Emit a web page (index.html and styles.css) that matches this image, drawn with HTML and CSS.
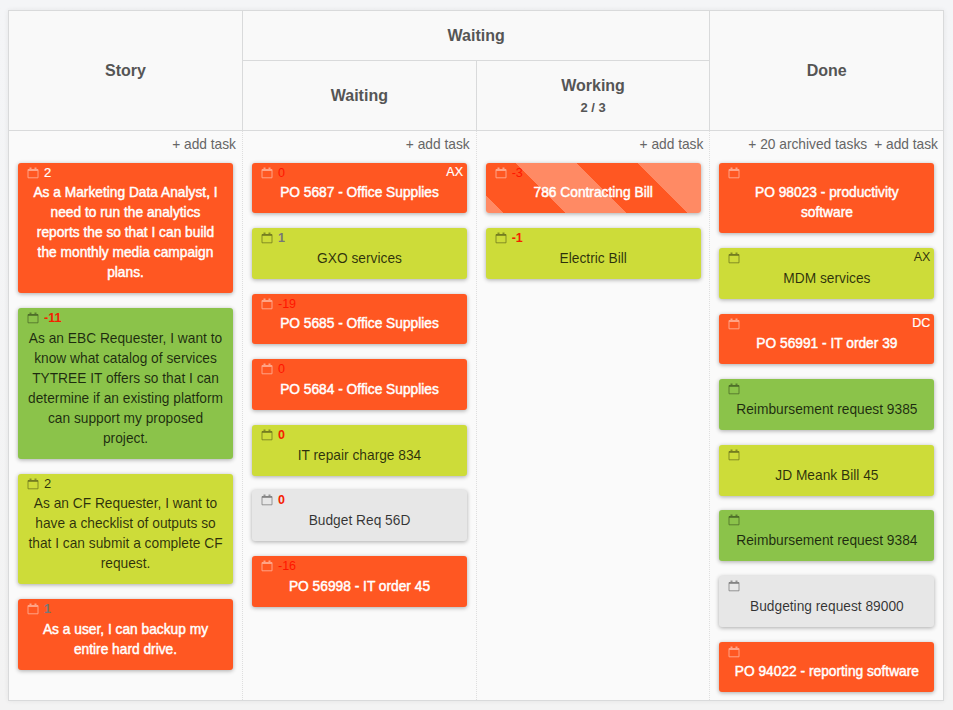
FILE: index.html
```html
<!DOCTYPE html>
<html lang="en">
<head>
<meta charset="utf-8">
<title>Kanban board</title>
<link rel="stylesheet" href="styles.css">
</head>
<body>
<svg class="defs" aria-hidden="true"><symbol id="cal" viewBox="0 0 12 12"><path d="M1 2.5h10v8.3H1z" fill="none" stroke="currentColor"/><path d="M1 2h10v2H1zM2.5.6h2v2h-2zM7.5.6h2v2h-2z" fill="currentColor"/></symbol></svg>
<main class="board">
  <header class="head">
    <div class="cell story">Story</div>
    <div class="cell group">Waiting</div>
    <div class="cell waiting">Waiting</div>
    <div class="cell working">Working<span class="limit">2 / 3</span></div>
    <div class="cell done">Done</div>
  </header>
  <div class="columns">
    <section class="column">
      <div class="actions"><span>+ add task</span></div>
      <article class="card orange"><div class="meta"><svg class="icon"><use href="#cal"/></svg><b class="plain">2</b></div><p>As a Marketing Data Analyst, I<br>need to run the analytics<br>reports the so that I can build<br>the monthly media campaign<br>plans.</p></article>
      <article class="card green"><div class="meta"><svg class="icon"><use href="#cal"/></svg><b class="late">-11</b></div><p>As an EBC Requester, I want to<br>know what catalog of services<br>TYTREE IT offers so that I can<br>determine if an existing platform<br>can support my proposed<br>project.</p></article>
      <article class="card lime"><div class="meta"><svg class="icon"><use href="#cal"/></svg><b class="plain">2</b></div><p>As an CF Requester, I want to<br>have a checklist of outputs so<br>that I can submit a complete CF<br>request.</p></article>
      <article class="card orange"><div class="meta"><svg class="icon"><use href="#cal"/></svg><b class="soon">1</b></div><p>As a user, I can backup my<br>entire hard drive.</p></article>
    </section>
    <section class="column">
      <div class="actions"><span>+ add task</span></div>
      <article class="card orange"><div class="meta"><svg class="icon"><use href="#cal"/></svg><b class="late">0</b><span class="who">AX</span></div><p>PO 5687 - Office Supplies</p></article>
      <article class="card lime"><div class="meta"><svg class="icon"><use href="#cal"/></svg><b class="soon">1</b></div><p>GXO services</p></article>
      <article class="card orange"><div class="meta"><svg class="icon"><use href="#cal"/></svg><b class="late">-19</b></div><p>PO 5685 - Office Supplies</p></article>
      <article class="card orange"><div class="meta"><svg class="icon"><use href="#cal"/></svg><b class="late">0</b></div><p>PO 5684 - Office Supplies</p></article>
      <article class="card lime"><div class="meta"><svg class="icon"><use href="#cal"/></svg><b class="late">0</b></div><p>IT repair charge 834</p></article>
      <article class="card gray"><div class="meta"><svg class="icon"><use href="#cal"/></svg><b class="late">0</b></div><p>Budget Req 56D</p></article>
      <article class="card orange"><div class="meta"><svg class="icon"><use href="#cal"/></svg><b class="late">-16</b></div><p>PO 56998 - IT order 45</p></article>
    </section>
    <section class="column">
      <div class="actions"><span>+ add task</span></div>
      <article class="card orange striped"><div class="meta"><svg class="icon"><use href="#cal"/></svg><b class="late">-3</b></div><p>786 Contracting Bill</p></article>
      <article class="card lime"><div class="meta"><svg class="icon"><use href="#cal"/></svg><b class="late">-1</b></div><p>Electric Bill</p></article>
    </section>
    <section class="column">
      <div class="actions"><span>+ 20 archived tasks</span><span>+ add task</span></div>
      <article class="card orange"><div class="meta"><svg class="icon"><use href="#cal"/></svg></div><p>PO 98023 - productivity<br>software</p></article>
      <article class="card lime"><div class="meta"><svg class="icon"><use href="#cal"/></svg><span class="who">AX</span></div><p>MDM services</p></article>
      <article class="card orange"><div class="meta"><svg class="icon"><use href="#cal"/></svg><span class="who">DC</span></div><p>PO 56991 - IT order 39</p></article>
      <article class="card green"><div class="meta"><svg class="icon"><use href="#cal"/></svg></div><p>Reimbursement request 9385</p></article>
      <article class="card lime"><div class="meta"><svg class="icon"><use href="#cal"/></svg></div><p>JD Meank Bill 45</p></article>
      <article class="card green"><div class="meta"><svg class="icon"><use href="#cal"/></svg></div><p>Reimbursement request 9384</p></article>
      <article class="card gray"><div class="meta"><svg class="icon"><use href="#cal"/></svg></div><p>Budgeting request 89000</p></article>
      <article class="card orange"><div class="meta"><svg class="icon"><use href="#cal"/></svg></div><p>PO 94022 - reporting software</p></article>
    </section>
  </div>
</main>
</body>
</html>
```

FILE: styles.css
```css
* { box-sizing: border-box; }
body {
  margin: 0;
  padding: 10px 9px 9px 8px;
  height: 710px;
  overflow: hidden;
  background: linear-gradient(#f4f5f7, #f3f3f3);
  font: 13.75px/20px "Liberation Sans", Arial, sans-serif;
  color: #555;
}
.defs { display: none; }
.board {
  width: 936px;
  height: 691px;
  border: 1px solid #d9dadb;
  background: #fafafa;
  box-shadow: 0 0 5px rgba(0, 0, 0, .07);
}
.head {
  display: grid;
  grid-template: 50px 70px / 234px 233.7px 233.7px 1fr;
  height: 120px;
  color: #555;
  font-weight: bold;
  font-size: 16px;
  background: #f9f9f9;
}
.cell {
  display: flex;
  flex-direction: column;
  align-items: center;
  justify-content: center;
  border: solid #d9dadb;
  border-width: 0 1px 1px 0;
}
.story { grid-area: 1 / 1 / 3 / 2; }
.group { grid-area: 1 / 2 / 2 / 4; }
.waiting { grid-area: 2 / 2; }
.working { grid-area: 2 / 3; padding-top: 2px; }
.done { grid-area: 1 / 4 / 3 / 5; border-right: 0; }
.limit { font-size: 13px; line-height: 20px; margin-top: 2px; }
.columns {
  display: grid;
  grid-template: 569px / 234px 233.7px 233.7px 1fr;
}
.column {
  padding: 3px 9px 0 9px;
  border-right: 1px dotted #dedede;
}
.column:last-child { border-right: 0; padding-right: 8px; }
.actions {
  display: flex;
  justify-content: flex-end;
  gap: 7px;
  height: 28.5px;
  padding-top: 1px;
  margin-right: -3px;
  color: #666;
}
.card {
  width: 215px;
  height: 50.8px;
  margin-bottom: 14.8px;
  border-radius: 3px;
  box-shadow: 0 1px 4px rgba(0, 0, 0, .32);
  color: rgba(0, 0, 0, .78);
}
.card:has(br) { height: auto; padding-bottom: 10px; }
.card p { margin: 0; padding-top: .8px; text-align: center; white-space: nowrap; }
.meta { display: flex; height: 20px; padding: 0 4px 0 9px; }
.icon { width: 12px; height: 12px; margin-top: 4px; opacity: .45; }
.meta b { margin-left: 5px; font-weight: bold; font-size: 12.5px; }
.meta .plain { font-weight: normal; font-size: 13px; }
.meta .late { color: #f52000; }
.meta .soon { color: #777; }
.orange .meta .late { color: #ff1500; font-weight: normal; }
.who { margin-left: auto; font-size: 12.5px; line-height: 18px; }
.orange { background: #ff5722; color: #fff; }
.orange p { -webkit-text-stroke: .45px #fff; }
.orange .plain, .orange .who { -webkit-text-stroke: .2px #fff; }
.green { background: #8bc34a; }
.lime { background: #cddc39; }
.gray { background: #e7e7e7; }
.striped {
  background: linear-gradient(45deg, #ff8a64 12.4px, #ff5722 12.4px, #ff5722 55.9px, #ff8a64 55.9px, #ff8a64 99.3px, #ff5722 99.3px, #ff5722 142.8px, #ff8a64 142.8px);
}
```
